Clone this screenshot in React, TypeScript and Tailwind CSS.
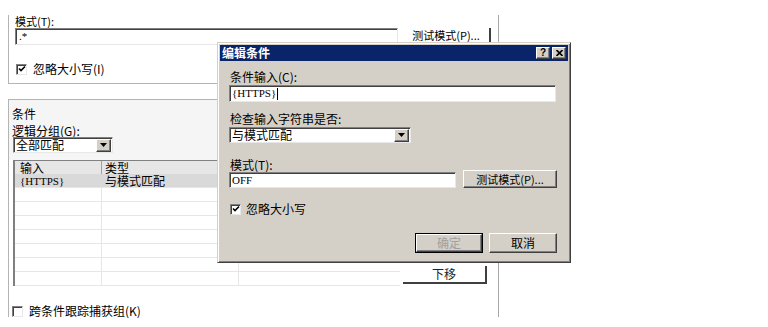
import React from "react";

const sunken =
  "border border-t-[#808080] border-l-[#808080] border-r-[#e8e8e8] border-b-[#e8e8e8] shadow-[inset_1px_1px_0_#404040] bg-white";
const raised =
  "bg-[#d4d0c8] border border-t-white border-l-white border-r-[#404040] border-b-[#404040] shadow-[inset_-1px_-1px_0_#808080]";

function Check({ checked }: { checked: boolean }) {
  return (
    <div className="w-[11px] h-[11px] border border-t-[#808080] border-l-[#808080] border-r-[#e8e8e8] border-b-[#e8e8e8] shadow-[inset_1px_1px_0_#404040] bg-white flex items-center justify-center shrink-0">
      {checked && (
        <svg width="8" height="8" viewBox="0 0 8 8">
          <path d="M1 3.5 L3 5.5 L7 1.5" stroke="#000" strokeWidth="1.6" fill="none" />
        </svg>
      )}
    </div>
  );
}

function Arrow() {
  return (
    <div className={`${raised} w-[15px] h-[13px] flex items-center justify-center shrink-0`}>
      <svg width="7" height="4" viewBox="0 0 7 4">
        <path d="M0 0 H7 L3.5 4 Z" fill="#000" />
      </svg>
    </div>
  );
}

function Select({ w, text }: { w: string; text: string }) {
  return (
    <div className={`${sunken} ${w} h-[16px] flex items-center justify-between pl-[2px] pr-[1px]`}>
      <span className="text-[12px] leading-[12px]">{text}</span>
      <Arrow />
    </div>
  );
}

const latin = "font-['Liberation_Serif',serif] text-[11px]";

export default function App() {
  const rows = Array.from({ length: 7 });
  return (
    <div className="relative w-[768px] h-[327px] bg-white overflow-hidden text-black font-['Noto_Sans_CJK_SC','Noto_Sans',sans-serif] text-[12px]">
      {/* background form */}
      <div className="mt-[15px] ml-[8px] w-[491px] h-[302px] border-r border-[#a8a8a8] flex flex-col">
        {/* top section */}
        <div className="h-[69px] border-l border-b border-[#b4b4b4] pl-[6px] flex flex-col">
          <div className="h-[13px] leading-[13px] text-[11px]">模式(T):</div>
          <div className="flex">
            <div className={`${sunken} w-[383px] h-[17px] flex items-center pl-[3px]`}>
              <span className={latin}>.*</span>
            </div>
            <div className="ml-[5px] w-[88px] h-[17px] border-r-2 border-b-2 border-[#404040] flex items-center justify-center text-[11px] leading-[11px]">
              测试模式(P)...
            </div>
          </div>
          <div className="mt-[18px] ml-[1px] flex items-center gap-[6px]">
            <Check checked />
            <span className="text-[12px] leading-[12px]">忽略大小写(I)</span>
          </div>
        </div>

        {/* conditions section */}
        <div className="mt-[15px] flex-1 border-l border-t border-[#b4b4b4] flex flex-col">
          <div className="bg-[#f5f5f5] pl-[3px] pt-[7px] pb-[7px] flex flex-col">
            <div className="h-[13px] leading-[13px]">条件</div>
            <div className="mt-[4px] h-[13px] leading-[13px]">逻辑分组(G):</div>
            <div className="ml-[1px]">
              <Select w="w-[100px]" text="全部匹配" />
            </div>
          </div>
          <div className="flex pl-[4px]">
            <div className="w-[387px] border-l-2 border-t border-[#808080] flex flex-col bg-white">
              <div className="flex h-[13px] bg-[#e6e6e6] text-[12px] leading-[13px]">
                <div className="w-[87px] border-r border-[#a0a0a0] pl-[5px]">输入</div>
                <div className="w-[137px] border-r border-[#a0a0a0] pl-[3px]">类型</div>
                <div className="flex-1" />
              </div>
              <div className="flex h-[14px] bg-[#d9d9d9] leading-[14px] border-b border-[#e6e6e6]">
                <div className={`w-[87px] pl-[5px] ${latin}`}>{"{HTTPS}"}</div>
                <div className="w-[137px] pl-[3px]">与模式匹配</div>
                <div className="flex-1" />
              </div>
              {rows.map((_, i) => (
                <div key={i} className="flex h-[14px] border-b border-[#e6e6e6]">
                  <div className="w-[87px] border-r border-[#e6e6e6]" />
                  <div className="w-[137px] border-r border-[#e6e6e6]" />
                  <div className="flex-1" />
                </div>
              ))}
            </div>
            <div className="ml-[3px] flex flex-col justify-end pb-[2px]">
              <div className="w-[84px] h-[18px] border-r-2 border-b-2 border-[#404040] flex items-center justify-center text-[12px] leading-[12px] text-[#222]">
                下移
              </div>
            </div>
          </div>
          <div className="mt-[19px] pl-[3px] flex items-center gap-[6px]">
            <Check checked={false} />
            <span className="text-[12px] leading-[12px]">跨条件跟踪捕获组(K)</span>
          </div>
        </div>
      </div>

      {/* dialog */}
      <div className="absolute left-[217px] top-[42px] w-[354px] h-[221px] bg-[#d4d0c8] border border-t-[#d4d0c8] border-l-[#d4d0c8] border-r-[#404040] border-b-[#404040] shadow-[inset_1px_1px_0_#ffffff,inset_-1px_-1px_0_#808080] p-[2px] flex flex-col">
        <div className="h-[16px] bg-[#0a246a] flex items-center justify-between pl-[2px] pr-[2px]">
          <span className="text-white font-bold text-[12px] leading-[12px]">编辑条件</span>
          <div className="flex gap-[2px]">
            <div className={`${raised} w-[14px] h-[12px] flex items-center justify-center text-[10px] leading-[10px] font-bold font-['Liberation_Sans',sans-serif]`}>?</div>
            <div className={`${raised} w-[14px] h-[12px] flex items-center justify-center`}>
              <svg width="7" height="6" viewBox="0 0 7 6">
                <path d="M0.5 0 L6.5 6 M6.5 0 L0.5 6" stroke="#000" strokeWidth="1.6" />
              </svg>
            </div>
          </div>
        </div>
        <div className="pl-[9px] pr-[11px] flex flex-col">
          <div className="mt-[9px] pl-[1px] h-[13px] leading-[13px]">条件输入(C):</div>
          <div className={`${sunken} mt-[2px] w-[327px] h-[17px] flex items-center pl-[2px]`}>
            <span className={latin}>{"{HTTPS}"}</span>
            <span className="ml-[1px] w-px h-[12px] bg-black" />
          </div>
          <div className="mt-[10px] pl-[1px] h-[13px] leading-[13px]">检查输入字符串是否:</div>
          <div className="mt-[2px]">
            <Select w="w-[182px]" text="与模式匹配" />
          </div>
          <div className="mt-[2px] flex items-end justify-between">
            <div className="flex flex-col">
              <div className="mt-[13px] pl-[1px] h-[13px] leading-[13px]">模式(T):</div>
              <div className={`${sunken} mt-[1px] w-[227px] h-[16px] flex items-center pl-[2px]`}>
                <span className={latin}>OFF</span>
              </div>
            </div>
            <div className={`${raised} w-[94px] h-[18px] flex items-center justify-center text-[11px] leading-[11px]`}>
              测试模式(P)...
            </div>
          </div>
          <div className="mt-[15px] pl-[1px] flex items-center gap-[5px]">
            <Check checked />
            <span className="text-[12px] leading-[12px]">忽略大小写</span>
          </div>
          <div className="mt-[18px] flex justify-end gap-[6px]">
            <div className="border border-black">
              <div className={`${raised} w-[66px] h-[18px] flex items-center justify-center text-[#a0a0a0]`}>确定</div>
            </div>
            <div className={`${raised} w-[68px] h-[20px] flex items-center justify-center`}>取消</div>
          </div>
        </div>
      </div>
    </div>
  );
}
